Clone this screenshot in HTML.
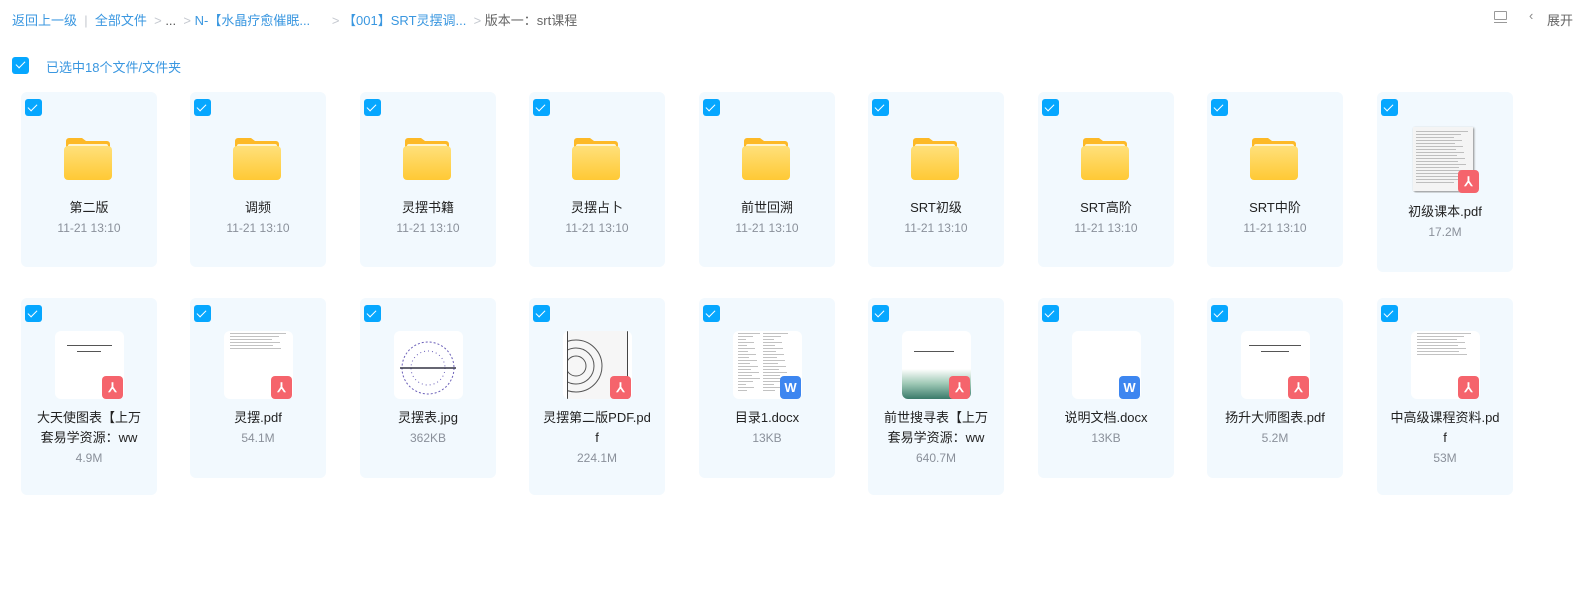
<!DOCTYPE html>
<html><head><meta charset="utf-8"><style>
*{margin:0;padding:0;box-sizing:border-box}
body{width:1573px;height:608px;background:#fff;font-family:"Liberation Sans","Noto Sans CJK SC",sans-serif;position:relative;overflow:hidden}
.a{position:absolute}
.bc{top:10px;font-size:13px;color:#3a97e0;white-space:nowrap}
.sep{color:#c4c8cf}
.card{position:absolute;width:136px;background:#f2f9fe;border-radius:6px}
.cb{position:absolute;left:4px;top:7px;width:17px;height:17px;background:#06a7ff;border-radius:3px}
.cb:after{content:"";position:absolute;left:5px;top:3px;width:4px;height:8px;border:solid #fff;border-width:0 1.6px 1.6px 0;transform:rotate(45deg)}
.fold{position:absolute;left:43px;top:45px;width:48px;height:43px}
.nm{position:absolute;left:0;width:136px;text-align:center;font-size:13px;color:#222;line-height:20px}
.dt{position:absolute;left:0;width:136px;text-align:center;font-size:12px;color:#8a909a}
.th{position:absolute;left:34px;top:33px;width:69px;height:68px;background:#fff;border-radius:6px;overflow:hidden}
.bd{position:absolute;left:81px;top:78px;width:21px;height:23px;border-radius:4px;color:#fff;font-size:13px;font-weight:bold;text-align:center;line-height:23px}
.pdf{background:#f5646c}.w{background:#3d86f0}
.ln{position:absolute;height:1px;background:#999}
</style></head><body>
<div class="a bc" style="left:12px">返回上一级 <span class="sep">&nbsp;|&nbsp;</span> 全部文件 <span class="sep">&nbsp;&gt;</span> <span style="color:#555">...</span> <span class="sep">&nbsp;&gt;</span> N-【水晶疗愈催眠... <span class="sep">&nbsp;&nbsp;&nbsp;&nbsp;&nbsp;&gt;</span> 【001】SRT灵摆调... <span class="sep">&nbsp;&gt;</span> <span style="color:#666">版本一：srt课程</span></div>
<div class="a" style="left:1494px;top:11px;width:13px;height:9px;border:1.3px solid #999;border-radius:1px"></div>
<div class="a" style="left:1494px;top:22px;width:13px;height:1.3px;background:#999"></div>
<div class="a" style="left:1529px;top:8px;font-size:13px;color:#888">‹</div>
<div class="a" style="left:1547px;top:10px;font-size:13px;color:#666;white-space:nowrap">展开</div>
<div class="a" style="left:12px;top:57px;width:17px;height:17px;background:#06a7ff;border-radius:3px"></div>
<div class="a" style="left:18px;top:59px;width:5px;height:9px;border:solid #fff;border-width:0 1.6px 1.6px 0;transform:rotate(45deg)"></div>
<div class="a" style="left:46px;top:57px;font-size:13px;color:#3a97e0">已选中18个文件/文件夹</div>

<svg width="0" height="0" style="position:absolute"><defs>
<linearGradient id="g1" x1="0" y1="0" x2="0" y2="1"><stop offset="0" stop-color="#ffe07a"/><stop offset="1" stop-color="#ffc935"/></linearGradient></defs></svg>

<div id="r1"></div>
<script>
var xs=[21,190,360,529,699,868,1038,1207,1377];
var f=["第二版","调频","灵摆书籍","灵摆占卜","前世回溯","SRT初级","SRT高阶","SRT中阶"];
var h="";
var fold='<svg class="fold" viewBox="0 0 48 43"><path d="M2 4a3 3 0 0 1 3-3h13l4 3h21a3 3 0 0 1 3 3v6H2z" fill="#fdb927"/><rect x="4" y="7" width="40" height="10" rx="2" fill="#fff4d0"/><rect x="0" y="9" width="48" height="34" rx="4" fill="url(#g1)"/></svg>';
for(var i=0;i<8;i++){h+='<div class="card" style="left:'+xs[i]+'px;top:92px;height:175px"><div class="cb"></div>'+fold+'<div class="nm" style="top:106px">'+f[i]+'</div><div class="dt" style="top:129px">11-21 13:10</div></div>';}
function lines(n,x0,y0,w){var s="";for(var k=0;k<n;k++){s+='<div class="ln" style="left:'+x0+'px;top:'+(y0+k*3)+'px;width:'+(w-(k*7%15))+'px;opacity:.6"></div>';}return s;}
h+='<div class="card" style="left:1377px;top:92px;height:180px"><div class="cb"></div><div class="th" style="background:#f2f9fe"><div style="position:absolute;left:2px;top:2px;width:60px;height:64px;background:#f4f4f4;box-shadow:1px 1px 2px #888">'+lines(18,3,4,52)+'</div></div><div class="bd pdf">⅄</div><div class="nm" style="top:110px">初级课本.pdf</div><div class="dt" style="top:133px">17.2M</div></div>';
var r2=[["大天使图表【上万<br>套易学资源：ww","4.9M",197,"pdf"],["灵摆.pdf","54.1M",180,"pdf"],["灵摆表.jpg","362KB",180,""],["灵摆第二版PDF.pd<br>f","224.1M",197,"pdf"],["目录1.docx","13KB",180,"w"],["前世搜寻表【上万<br>套易学资源：ww","640.7M",197,"pdf"],["说明文档.docx","13KB",180,"w"],["扬升大师图表.pdf","5.2M",180,"pdf"],["中高级课程资料.pd<br>f","53M",197,"pdf"]];
for(var i=0;i<9;i++){var r=r2[i];var two=r[0].indexOf("<br>")>0;
var inner="";
if(i==0)inner='<div class="ln" style="left:12px;top:14px;width:45px;background:#555"></div><div class="ln" style="left:22px;top:20px;width:24px;background:#555"></div>';
if(i==1)inner=lines(6,6,2,56);
if(i==2)inner='<svg width="69" height="68"><circle cx="34" cy="37" r="26" fill="none" stroke="#6a5fb8" stroke-dasharray="2 2"/><circle cx="34" cy="37" r="17" fill="none" stroke="#6a5fb8" stroke-dasharray="1 3"/><line x1="6" y1="37" x2="62" y2="37" stroke="#334" stroke-width="1.5"/></svg>';
if(i==3)inner='<div style="position:absolute;left:4px;top:0;width:61px;height:68px;background:#f6f6f6;border-left:1px solid #444;border-right:1px solid #444"><svg width="60" height="68"><g fill="none" stroke="#555"><circle cx="8" cy="35" r="26"/><circle cx="8" cy="35" r="18"/><circle cx="8" cy="35" r="10"/></g></svg></div>';
if(i==4)inner=lines(20,5,2,22)+lines(20,30,2,25);
if(i==5)inner='<div class="ln" style="left:12px;top:20px;width:40px;background:#555"></div><div style="position:absolute;left:0;top:38px;width:69px;height:30px;background:linear-gradient(180deg,#fff,#9cc7b4 50%,#3a7a6a)"></div>';
if(i==7)inner='<div class="ln" style="left:8px;top:14px;width:52px;background:#555"></div><div class="ln" style="left:20px;top:20px;width:28px;background:#555"></div>';
if(i==8)inner=lines(8,6,2,54);
h+='<div class="card" style="left:'+xs[i]+'px;top:298px;height:'+r[2]+'px"><div class="cb"></div><div class="th">'+inner+'</div>'+(r[3]=="pdf"?'<div class="bd pdf">⅄</div>':r[3]=="w"?'<div class="bd w">W</div>':'')+'<div class="nm" style="top:110px">'+r[0]+'</div><div class="dt" style="top:'+(two?153:133)+'px">'+r[1]+'</div></div>';}
document.getElementById("r1").innerHTML=h;
</script>
</body></html>
